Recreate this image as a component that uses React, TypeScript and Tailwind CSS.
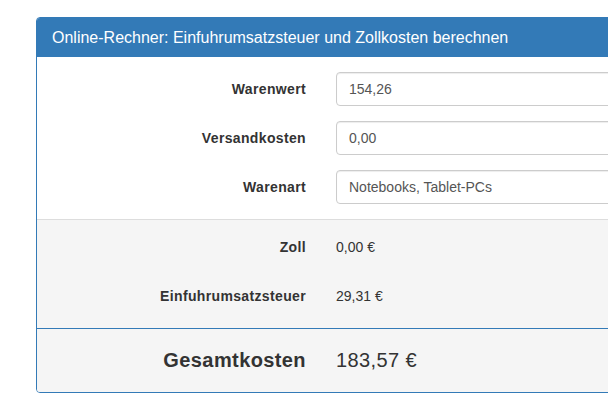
const fields = [
  { label: "Warenwert", value: "154,26" },
  { label: "Versandkosten", value: "0,00" },
  { label: "Warenart", value: "Notebooks, Tablet-PCs" },
];

const results = [
  { label: "Zoll", value: "0,00 €" },
  { label: "Einfuhrumsatzsteuer", value: "29,31 €" },
];

export default function App() {
  return (
    <div className="h-[401px] w-[608px] overflow-hidden bg-white pl-[36px] pt-[17px] font-['Liberation_Sans',Arial,sans-serif] text-[14px] text-[#333]">
      <div className="w-[880px] overflow-hidden rounded-[4px] border border-[#337ab7]">
        <div className="flex h-[39px] items-center bg-[#337ab7] px-[15px] text-[16px] text-white">
          Online-Rechner: Einfuhrumsatzsteuer und Zollkosten berechnen
        </div>

        <div className="flex flex-col gap-[15px] bg-white py-[15px]">
          {fields.map((f) => (
            <div key={f.label} className="flex items-center">
              <label className="w-[269px] text-right font-bold tracking-[0.35px]">{f.label}</label>
              <div className="ml-[30px] flex h-[34px] flex-1 items-center rounded-[4px] border border-[#ccc] px-[12px] text-[#555] shadow-[inset_0_1px_1px_rgba(0,0,0,0.075)]">
                {f.value}
              </div>
            </div>
          ))}
        </div>

        <div className="border-t border-[#ddd] bg-[#f5f5f5]">
          <div className="flex flex-col gap-[29px] pb-[22px] pt-[17px]">
            {results.map((r) => (
              <div key={r.label} className="flex h-[20px] items-center">
                <span className="w-[269px] text-right font-bold tracking-[0.35px]">{r.label}</span>
                <span className="ml-[30px]">{r.value}</span>
              </div>
            ))}
          </div>
          <div className="flex h-[64px] items-center border-t border-[#337ab7] pb-[1px] text-[20px]">
            <span className="w-[269px] text-right font-bold tracking-[0.4px]">Gesamtkosten</span>
            <span className="ml-[30px] tracking-[0.4px]">183,57 €</span>
          </div>
        </div>
      </div>
    </div>
  );
}
